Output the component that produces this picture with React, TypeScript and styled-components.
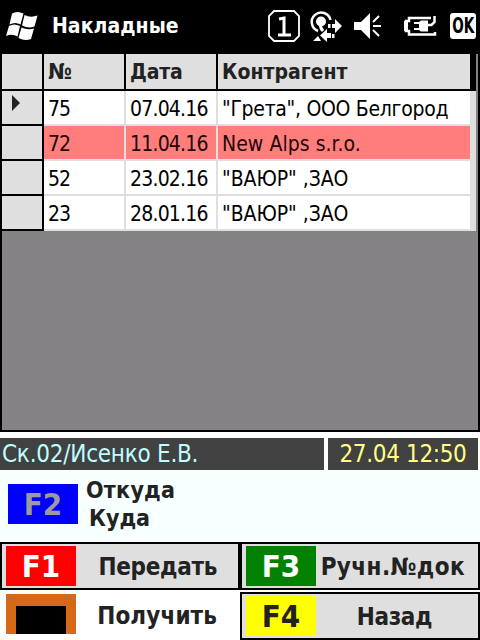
import React from "react";
import styled, { createGlobalStyle } from "styled-components";

const GlobalStyle = createGlobalStyle`
  * { box-sizing: border-box; }
  body { margin: 0; background: #fff; overflow: hidden; }
`;

const Screen = styled.main`
  width: 480px;
  height: 640px;
  display: flex;
  flex-direction: column;
  overflow: hidden;
  background: #fff;
  color: #000;
  font-family: "DejaVu Sans Condensed", "DejaVu Sans", Tahoma, sans-serif;
  font-stretch: condensed;
  font-size: 21px;
  white-space: pre;
`;

const Text = styled.span<{ $size?: number; $bold?: boolean; $track?: number; $color?: string }>`
  font-size: ${(p) => p.$size ?? 21}px;
  font-weight: ${(p) => (p.$bold ? 700 : 400)};
  letter-spacing: ${(p) => p.$track ?? 0}px;
  color: ${(p) => p.$color ?? "inherit"};
  line-height: 28px;
`;

const TitleBar = styled.header`
  height: 54px;
  flex: none;
  display: flex;
  align-items: center;
  background: #000;
  color: #fff;
  padding: 0 4px 2px 0;
`;

const Logo = styled.svg`
  width: 52px;
  height: 52px;
  flex: none;
`;

const Tray = styled.svg`
  width: 184px;
  height: 52px;
  margin-left: auto;
  flex: none;
`;

const OkBadge = styled.div`
  width: 26px;
  height: 26px;
  flex: none;
  display: flex;
  align-items: center;
  justify-content: center;
  background: #fff;
  border-radius: 3px;
  color: #000;
`;

const OkText = styled(Text)`
  transform: scaleX(0.72);
`;

const GridFrame = styled.section`
  height: 378px;
  flex: none;
  background: #848284;
  border: solid #000;
  border-width: 0 2px 2px;
`;

const GridRow = styled.div<{ $head?: boolean }>`
  display: grid;
  grid-template-columns: 42px 82px 92px 252px 6px;
  height: ${(p) => (p.$head ? 37 : 35)}px;
  width: 474px;
`;

const HeadCell = styled.div<{ $last?: boolean }>`
  display: flex;
  align-items: center;
  padding-left: 4px;
  background: #dedfde;
  color: #222;
  border: solid #000;
  border-width: 0 ${(p) => (p.$last ? 0 : 2)}px 2px 0;
`;

const HeadEdge = styled.div`
  background: #000;
`;

const Marker = styled.div`
  background: #dedfde;
  border: solid #000;
  border-width: 0 2px 2px 0;
  padding: 4px 0 0 10px;
`;

const MarkerArrow = styled.svg`
  display: block;
  width: 8px;
  height: 16px;
`;

const Cell = styled.div<{ $hot?: boolean; $last?: boolean }>`
  display: flex;
  align-items: center;
  padding-left: 4px;
  padding-top: 2px;
  background: ${(p) => (p.$hot ? "#ff7d7b" : "#fff")};
  color: ${(p) => (p.$hot ? "#200808" : "#000")};
  border: solid #dedfde;
  border-width: 0 ${(p) => (p.$last ? 0 : 2)}px 2px 0;
`;

const RowEdge = styled.div`
  background: #dedfde;
`;

const StatusBar = styled.div`
  display: grid;
  grid-template-columns: 324px 150px;
  gap: 4px;
  height: 32px;
  margin-top: 6px;
  flex: none;
`;

const StatusCell = styled.div<{ $center?: boolean }>`
  display: flex;
  align-items: center;
  justify-content: ${(p) => (p.$center ? "center" : "flex-start")};
  padding-left: ${(p) => (p.$center ? 0 : 2)}px;
  background: #424142;
`;

const Route = styled.div`
  height: 72px;
  flex: none;
  display: flex;
  align-items: center;
  gap: 8px;
  padding: 0 0 4px 8px;
  background: #f7ffff;
`;

const RouteNames = styled.div`
  display: flex;
  flex-direction: column;
  color: #222;
`;

const Indent = styled.div`
  padding-left: 3px;
`;

const Badge = styled.div<{ $bg: string }>`
  width: 70px;
  height: 40px;
  flex: none;
  display: flex;
  align-items: center;
  justify-content: center;
  background: ${(p) => p.$bg};
`;

const Keys = styled.div`
  display: grid;
  grid-template-columns: 240px 240px;
  grid-template-rows: 48px 48px;
  row-gap: 2px;
`;

const KeyButton = styled.button<{ $flat?: boolean; $pad?: number }>`
  display: flex;
  align-items: center;
  margin: 0;
  padding: 0 ${(p) => p.$pad ?? 14}px 0 4px;
  padding-bottom: ${(p) => (p.$flat ? 4 : 0)}px;
  font: inherit;
  white-space: pre;
  color: #222;
  background: ${(p) => (p.$flat ? "#fff" : "#dedfde")};
  border: 2px solid ${(p) => (p.$flat ? "#fff" : "#000")};
`;

const KeyLabel = styled.div<{ $drop?: number }>`
  flex: 1;
  display: flex;
  justify-content: flex-end;
  padding-top: ${(p) => p.$drop ?? 0}px;
`;

const OrangeBadge = styled(Badge)`
  align-items: flex-end;
`;

const BlackBox = styled.div`
  width: 50px;
  height: 28px;
  background: #000;
`;

const rows = [
  { id: "75", date: "07.04.16", name: "\"Грета\", ООО Белгород", track: -0.3 },
  { id: "72", date: "11.04.16", name: "New Alps s.r.o.", hot: true, track: 0.05 },
  { id: "52", date: "23.02.16", name: "\"ВАЮР\" ,ЗАО", track: -0.05 },
  { id: "23", date: "28.01.16", name: "\"ВАЮР\" ,ЗАО", track: -0.05 },
];

function TrayIcons() {
  return (
    <Tray viewBox="266 0 184 52" fill="none" stroke="#fff" strokeWidth="2">
      <path d="M274 11h20l5 5v20l-5 5h-20l-5-5V16z" strokeWidth="1.8" />
      <path d="M279 19l5-1v17M278 35h13" strokeWidth="3" />
      <path d="M318 31A9.500 9.500 0 1 1 330.500 20" strokeWidth="2.500" />
      <circle cx="321" cy="21.500" r="5" fill="#fff" stroke="none" />
      <path d="M320.500 24q-.5 4 2.500 7" strokeWidth="3" />
      <path d="M335 19l7 7-7 7v-5h-3v-4h3zM328 24h2.500v4H328zM327 29v4h4v5h-4v4l-7-6.500zM332 34h2.500v4H332zM313 41l5-5 3 5z" fill="#fff" stroke="none" />
      <path d="M354 22h7l9-9v26l-9-9h-7z" fill="#fff" stroke="none" />
      <path d="M373 22l6-6M373 26h8M373 30l6 6" />
      <path d="M431 18h-22v3h-3v10h3v3.500h26v-2.500M434.500 16v6l-3 3h-4" strokeWidth="2.500" />
      <path d="M404 21h4v10h-4zM421 20.500h7v11h-7l-2-1.500h-5v-2h5v-4h-5v-2h5z" fill="#fff" stroke="none" />
    </Tray>
  );
}

export default function App() {
  return (
    <Screen>
      <GlobalStyle />
      <TitleBar>
        <Logo viewBox="0 0 52 52" fill="#fff">
          <path d="M12 13.500q5-3 11.500 0l-3 11q-5-3-11 0z" />
          <path d="M24.500 15q6 3 13 .5l-3 11q-6 2.500-12.500-1z" />
          <path d="M9 26q5-3 11 0l-2.500 10.500q-5-3-11.500-.5z" />
          <path d="M21.500 27.500q6 3 12.500 1l-3 10.500q-6 2.500-12.500-1z" />
        </Logo>
        <Text $bold $track={0.05}>Накладные</Text>
        <TrayIcons />
        <OkBadge><OkText $bold>OK</OkText></OkBadge>
      </TitleBar>

      <GridFrame>
        <GridRow $head>
          <HeadCell />
          <HeadCell><Text $bold $size={22}>№</Text></HeadCell>
          <HeadCell><Text $bold $track={-0.2}>Дата</Text></HeadCell>
          <HeadCell $last><Text $bold>Контрагент</Text></HeadCell>
          <HeadEdge />
        </GridRow>
        {rows.map((r, i) => (
          <GridRow key={r.id}>
            <Marker>
              {i === 0 && (
                <MarkerArrow viewBox="0 0 8 16"><path d="M0 0l8 8-8 8z" fill="#222" /></MarkerArrow>
              )}
            </Marker>
            <Cell $hot={r.hot}><Text $track={-1}>{r.id}</Text></Cell>
            <Cell $hot={r.hot}><Text $track={-0.8}>{r.date}</Text></Cell>
            <Cell $hot={r.hot} $last><Text $track={r.track}>{r.name}</Text></Cell>
            <RowEdge />
          </GridRow>
        ))}
      </GridFrame>

      <StatusBar>
        <StatusCell><Text $size={24} $track={-0.25} $color="#bdffff">Ск.02/Исенко Е.В.</Text></StatusCell>
        <StatusCell $center><Text $size={24} $track={-0.35} $color="#ffff84">27.04 12:50</Text></StatusCell>
      </StatusBar>

      <Route>
        <Badge $bg="#0000ff"><Text $bold $size={31} $color="#9c9a9c">F2</Text></Badge>
        <RouteNames>
          <Text $bold $size={23} $track={0.25}>Откуда</Text>
          <Indent><Text $bold $size={23}>Куда</Text></Indent>
        </RouteNames>
      </Route>

      <Keys>
        <KeyButton $pad={21}>
          <Badge $bg="#ff0000"><Text $bold $size={31} $color="#fff">F1</Text></Badge>
          <KeyLabel $drop={2}><Text $bold $size={24} $track={-0.3}>Передать</Text></KeyLabel>
        </KeyButton>
        <KeyButton $pad={13}>
          <Badge $bg="#008200"><Text $bold $size={31} $color="#fff">F3</Text></Badge>
          <KeyLabel $drop={2}><Text $bold $size={24} $track={0.4}>Ручн.№док</Text></KeyLabel>
        </KeyButton>
        <KeyButton $flat $pad={21}>
          <OrangeBadge $bg="#d66918"><BlackBox /></OrangeBadge>
          <KeyLabel $drop={4}><Text $bold $size={24} $track={0.1}>Получить</Text></KeyLabel>
        </KeyButton>
        <KeyButton $pad={46}>
          <Badge $bg="#ffff00"><Text $bold $size={31}>F4</Text></Badge>
          <KeyLabel $drop={2}><Text $bold $size={24} $track={-0.4}>Назад</Text></KeyLabel>
        </KeyButton>
      </Keys>
    </Screen>
  );
}
